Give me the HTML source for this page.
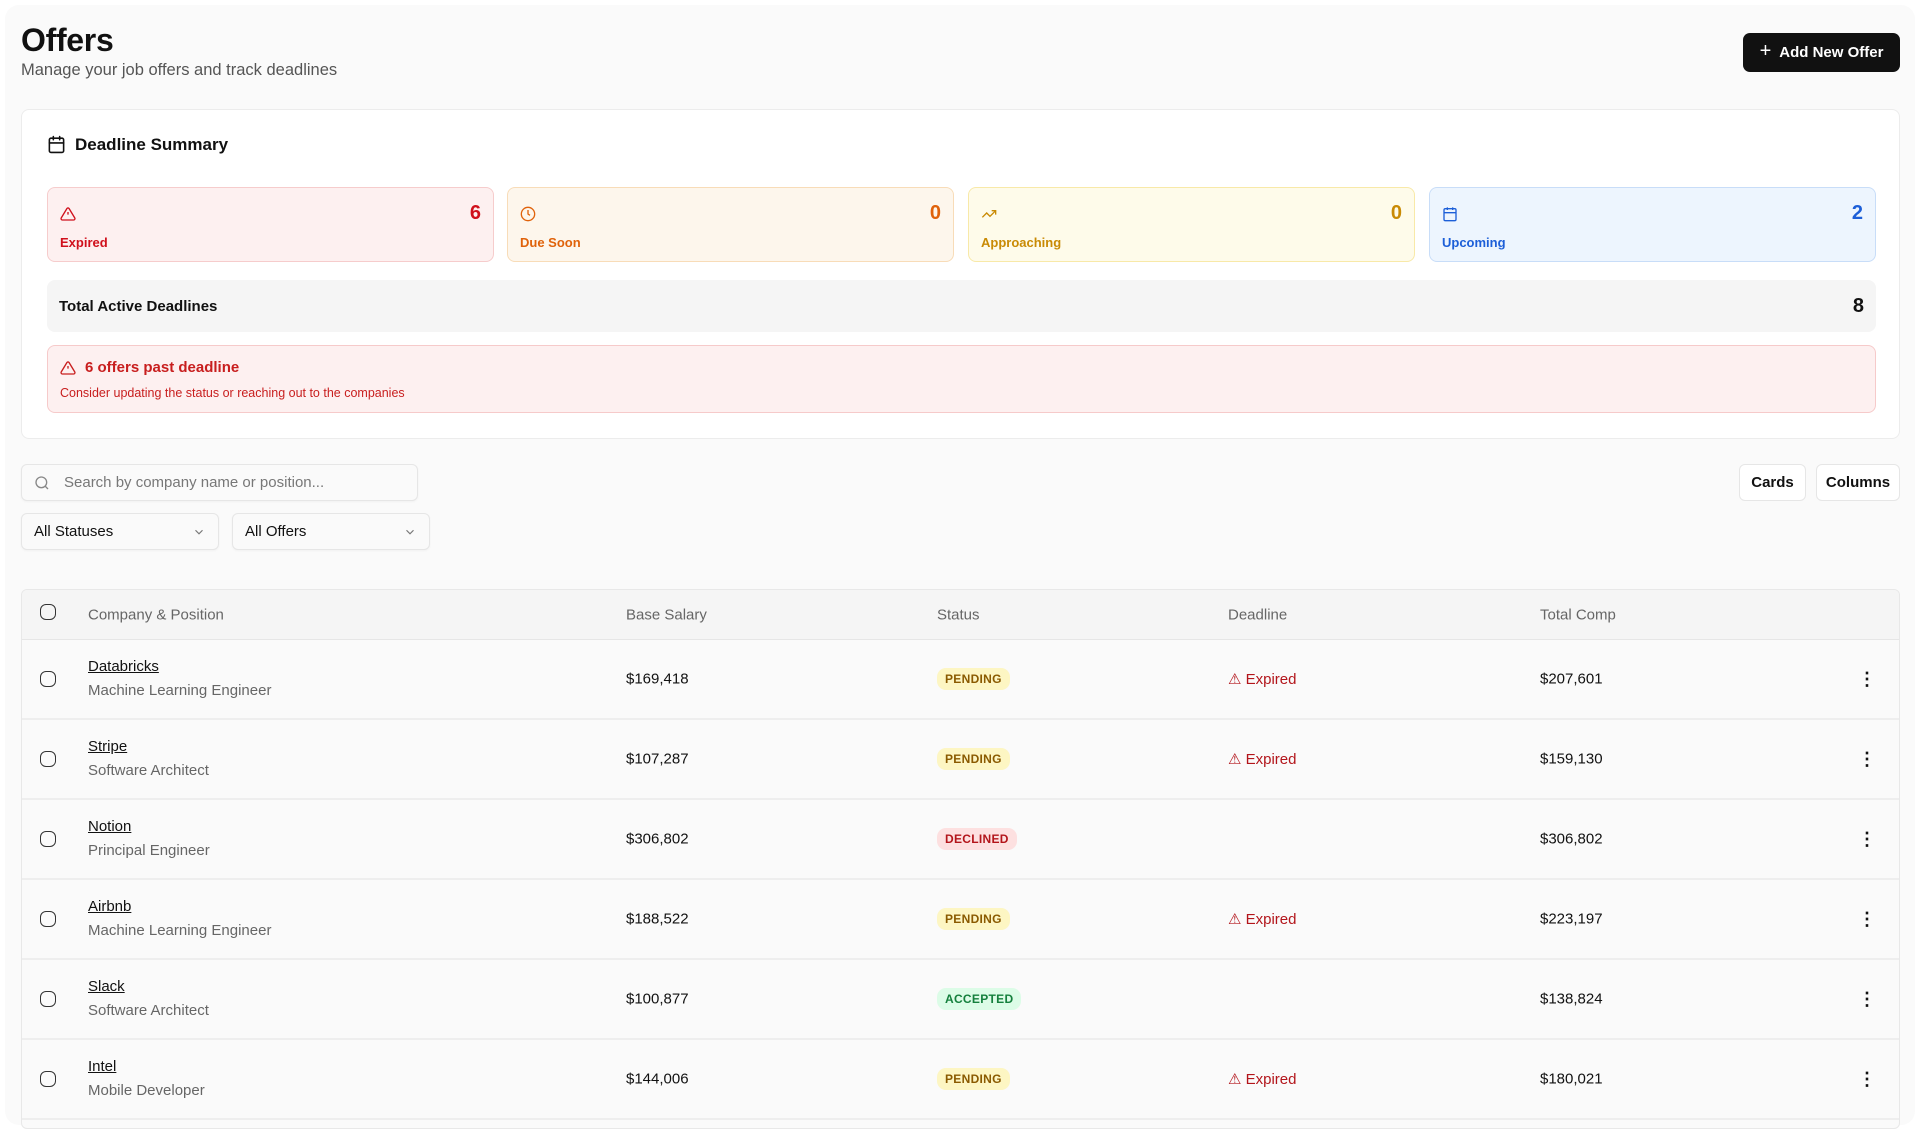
<!DOCTYPE html>
<html><head><meta charset="utf-8"><style>
*{box-sizing:border-box;margin:0;padding:0}
body{width:1920px;height:1106px;overflow:hidden;background:#fff;font-family:"Liberation Sans",sans-serif;color:#111;position:relative}
.wrap{position:absolute;left:5px;top:5px;width:1910px;height:1120px;background:#fafafa;border-radius:14px}
.a{position:absolute}
h1{position:absolute;left:21px;top:22px;font-size:32px;font-weight:700;letter-spacing:-0.3px}
.sub{left:21px;top:61px;font-size:16.5px;color:#555}
.btn{left:1743px;top:33px;width:157px;height:39px;background:#111;color:#fff;border-radius:7px;font-size:15px;font-weight:700;display:flex;align-items:center;justify-content:center;gap:8px}
.card{left:21px;top:109px;width:1879px;height:330px;background:#fff;border:1px solid #ececec;border-radius:8px}
.stat{top:187px;width:447px;height:75px;border-radius:8px;border:1px solid}
.stat .n{position:absolute;right:12px;top:14px;font-size:20px;font-weight:700}
.stat .l{position:absolute;left:12px;top:47px;font-size:13px;font-weight:700}
.stat svg{position:absolute;left:12px;top:18px}
.total{left:47px;top:280px;width:1829px;height:52px;background:#f5f5f5;border-radius:8px;font-size:15px;font-weight:700;display:flex;align-items:center;justify-content:space-between;padding:0 12px}
.alert{left:47px;top:345px;width:1829px;height:68px;background:#fdf0f0;border:1px solid #f6caca;border-radius:8px;color:#c81e1e}
.inp{top:464px;height:37px;background:#fafafa;border:1px solid #e6e6e6;border-radius:6px;font-size:15px;display:flex;align-items:center;padding:0 12px;box-shadow:0 1px 2px rgba(0,0,0,.04)}
.tb{top:464px;height:37px;background:#fff;border:1px solid #e6e6e6;border-radius:6px;font-size:15px;font-weight:700;display:flex;align-items:center;justify-content:center}
.table{left:21px;top:589px;width:1879px;height:540px;border:1px solid #e8e8e8;border-radius:6px;background:#fafafa;overflow:hidden}
.hdr{position:absolute;left:0;top:0;width:100%;height:50px;background:#f5f5f5;border-bottom:1px solid #e6e6e6;font-size:15px;color:#666}
.row{position:absolute;left:0;width:100%;height:80px;border-bottom:2px solid #eee;font-size:15px}
.c{position:absolute;top:50%;transform:translateY(-50%)}
.cb{width:16px;height:16px;border:1.5px solid #333;border-radius:6px;left:18px}
.co{left:66px;top:18px;transform:none}
.co b{font-weight:400;text-decoration:underline;display:block;font-size:15px;color:#111}
.co span{display:block;color:#666;margin-top:7px}
.badge{left:915px;padding:4px 8px;border-radius:9px;font-size:12px;font-weight:700;letter-spacing:.3px}
.pend{background:#fdf6c3;color:#8a5a00}
.decl{background:#fde0e0;color:#b3151b}
.acc{background:#dcfce7;color:#15803d}
.exp{left:1206px;color:#b3151b}
.dots{left:1836px;font-size:18px;font-weight:700;line-height:1}
</style></head><body><div class="wrap"></div>
<h1>Offers</h1>
<div class="a sub">Manage your job offers and track deadlines</div>
<div class="a btn"><span style="font-size:20px;font-weight:400;margin-top:-2px">+</span>Add New Offer</div>
<div class="a card"></div>
<svg class="a" style="left:47px;top:135px" width="19" height="19" viewBox="0 0 24 24" fill="none" stroke="#111" stroke-width="2" stroke-linecap="round"><rect x="3" y="4" width="18" height="18" rx="2"/><path d="M16 2v4M8 2v4M3 10h18"/></svg>
<div class="a" style="left:75px;top:135px;font-size:17px;font-weight:700">Deadline Summary</div>

<div class="a stat" style="left:47px;background:#fdf0f0;border-color:#f6cccc;color:#d0101c"><svg width="16" height="16" viewBox="0 0 24 24" fill="none" stroke="#d0101c" stroke-width="2"><path d="M10.3 3.9 1.8 18a2 2 0 0 0 1.7 3h17a2 2 0 0 0 1.7-3L13.7 3.9a2 2 0 0 0-3.4 0zM12 9v4M12 17h.01"/></svg><div class="n">6</div><div class="l">Expired</div></div>
<div class="a stat" style="left:507px;background:#fdf6ec;border-color:#f8dcb8;color:#e0620a"><svg width="16" height="16" viewBox="0 0 24 24" fill="none" stroke="#e0620a" stroke-width="2"><circle cx="12" cy="12" r="10"/><path d="M12 6v6l3 2"/></svg><div class="n">0</div><div class="l">Due Soon</div></div>
<div class="a stat" style="left:968px;background:#fefbea;border-color:#f8e9a8;color:#c98a04"><svg width="16" height="16" viewBox="0 0 24 24" fill="none" stroke="#c98a04" stroke-width="2"><path d="M22 7l-8.5 8.5-5-5L2 17M16 7h6v6"/></svg><div class="n">0</div><div class="l">Approaching</div></div>
<div class="a stat" style="left:1429px;background:#edf5fe;border-color:#c8ddf8;color:#1d5fd8"><svg width="16" height="16" viewBox="0 0 24 24" fill="none" stroke="#1d5fd8" stroke-width="2"><rect x="3" y="4" width="18" height="18" rx="2"/><path d="M16 2v4M8 2v4M3 10h18"/></svg><div class="n">2</div><div class="l">Upcoming</div></div>

<div class="a total"><span>Total Active Deadlines</span><span style="font-size:20px">8</span></div>
<div class="a alert"><svg class="a" style="left:12px;top:14px" width="16" height="16" viewBox="0 0 24 24" fill="none" stroke="#c81e1e" stroke-width="2"><path d="M10.3 3.9 1.8 18a2 2 0 0 0 1.7 3h17a2 2 0 0 0 1.7-3L13.7 3.9a2 2 0 0 0-3.4 0zM12 9v4M12 17h.01"/></svg><div class="a" style="left:37px;top:13px;font-size:15px;font-weight:700">6 offers past deadline</div><div class="a" style="left:12px;top:40px;font-size:12.5px">Consider updating the status or reaching out to the companies</div></div>

<div class="a inp" style="left:21px;width:397px;color:#777"><svg width="16" height="16" viewBox="0 0 24 24" fill="none" stroke="#888" stroke-width="2" style="margin-right:14px"><circle cx="11" cy="11" r="8"/><path d="m21 21-4.3-4.3"/></svg>Search by company name or position...</div>
<div class="a tb" style="left:1739px;width:67px">Cards</div>
<div class="a tb" style="left:1816px;width:84px">Columns</div>
<div class="a inp" style="left:21px;top:513px;width:198px;justify-content:space-between;color:#111">All Statuses<svg width="14" height="14" viewBox="0 0 24 24" fill="none" stroke="#777" stroke-width="2"><path d="m6 9 6 6 6-6"/></svg></div>
<div class="a inp" style="left:232px;top:513px;width:198px;justify-content:space-between;color:#111">All Offers<svg width="14" height="14" viewBox="0 0 24 24" fill="none" stroke="#777" stroke-width="2"><path d="m6 9 6 6 6-6"/></svg></div>

<div class="a table">
<div class="hdr"><div class="c cb" style="margin-top:-3px"></div><div class="c" style="left:66px">Company &amp; Position</div><div class="c" style="left:604px">Base Salary</div><div class="c" style="left:915px">Status</div><div class="c" style="left:1206px">Deadline</div><div class="c" style="left:1518px">Total Comp</div></div>

<div class="row" style="top:50px"><div class="c cb"></div><div class="c co"><b>Databricks</b><span>Machine Learning Engineer</span></div><div class="c" style="left:604px">$169,418</div><div class="c badge pend">PENDING</div><div class="c exp">⚠ Expired</div><div class="c" style="left:1518px">$207,601</div><div class="c dots">⋮</div></div>
<div class="row" style="top:130px"><div class="c cb"></div><div class="c co"><b>Stripe</b><span>Software Architect</span></div><div class="c" style="left:604px">$107,287</div><div class="c badge pend">PENDING</div><div class="c exp">⚠ Expired</div><div class="c" style="left:1518px">$159,130</div><div class="c dots">⋮</div></div>
<div class="row" style="top:210px"><div class="c cb"></div><div class="c co"><b>Notion</b><span>Principal Engineer</span></div><div class="c" style="left:604px">$306,802</div><div class="c badge decl">DECLINED</div><div class="c" style="left:1518px">$306,802</div><div class="c dots">⋮</div></div>
<div class="row" style="top:290px"><div class="c cb"></div><div class="c co"><b>Airbnb</b><span>Machine Learning Engineer</span></div><div class="c" style="left:604px">$188,522</div><div class="c badge pend">PENDING</div><div class="c exp">⚠ Expired</div><div class="c" style="left:1518px">$223,197</div><div class="c dots">⋮</div></div>
<div class="row" style="top:370px"><div class="c cb"></div><div class="c co"><b>Slack</b><span>Software Architect</span></div><div class="c" style="left:604px">$100,877</div><div class="c badge acc">ACCEPTED</div><div class="c" style="left:1518px">$138,824</div><div class="c dots">⋮</div></div>
<div class="row" style="top:450px"><div class="c cb"></div><div class="c co"><b>Intel</b><span>Mobile Developer</span></div><div class="c" style="left:604px">$144,006</div><div class="c badge pend">PENDING</div><div class="c exp">⚠ Expired</div><div class="c" style="left:1518px">$180,021</div><div class="c dots">⋮</div></div>
</div>
</body></html>
